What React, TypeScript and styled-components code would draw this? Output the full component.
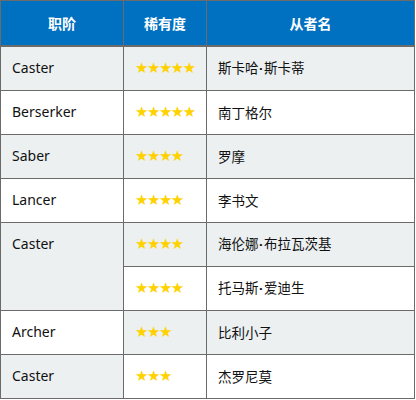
import React from "react";
import styled, { createGlobalStyle } from "styled-components";

const Global = createGlobalStyle`
  html, body { margin: 0; padding: 0; background: #ffffff; }
  body { font-family: "Noto Sans", "Noto Sans CJK SC", sans-serif; }
`;

const Table = styled.table`
  width: 414px;
  border-collapse: collapse;
  table-layout: fixed;
  font-size: 14px;
  color: #111;
`;

const Col = styled.col<{ $w: number }>`
  width: ${(p) => p.$w}px;
`;

const HeadCell = styled.th`
  height: 44px;
  padding: 0;
  background: #0070c0;
  color: #fff;
  font-family: "Noto Sans CJK SC", sans-serif;
  font-weight: 700;
  font-size: 14px;
  text-align: center;
  border: 1px solid #6b6b6b;
  border-bottom: 2px solid #6b6b6b;
`;

const Row = styled.tr`
  height: 44px;
`;

const Cell = styled.td<{ $shade?: boolean; $top?: boolean; $dashed?: boolean }>`
  padding: ${(p) => (p.$top ? "11px 11px 0" : "0 11px")};
  vertical-align: ${(p) => (p.$top ? "top" : "middle")};
  background: ${(p) => (p.$shade ? "#ecf0f1" : "#ffffff")};
  border: 1px solid #6b6b6b;
  ${(p) => (p.$dashed ? "border-top: 1px dashed #c8c8c8;" : "")}
  line-height: 20px;
  white-space: nowrap;
`;

const Name = styled.span`
  font-family: "Noto Sans CJK SC", sans-serif;
  font-size: 13.5px;
`;

const Dot = styled.span`
  font-family: "Liberation Sans", sans-serif;
  font-weight: 700;
  margin: 0 0.5px;
`;

const Stars = styled.span`
  font-family: "DejaVu Sans", sans-serif;
  font-size: 15px;
  color: #ffd200;
  letter-spacing: -1.5px;
`;

type R = {
  cls?: string;
  rowSpan?: number;
  clsShade?: boolean;
  stars: number;
  starShade: boolean;
  name: string;
  nameShade: boolean;
  dashed?: boolean;
};

const rows: R[] = [
  { cls: "Caster", clsShade: true, stars: 5, starShade: true, name: "斯卡哈·斯卡蒂", nameShade: true },
  { cls: "Berserker", clsShade: false, stars: 5, starShade: false, name: "南丁格尔", nameShade: false },
  { cls: "Saber", clsShade: true, stars: 4, starShade: true, name: "罗摩", nameShade: true },
  { cls: "Lancer", clsShade: false, stars: 4, starShade: false, name: "李书文", nameShade: false },
  { cls: "Caster", rowSpan: 2, clsShade: true, stars: 4, starShade: true, name: "海伦娜·布拉瓦茨基", nameShade: true },
  { stars: 4, starShade: false, name: "托马斯·爱迪生", nameShade: false, dashed: true },
  { cls: "Archer", clsShade: false, stars: 3, starShade: true, name: "比利小子", nameShade: true },
  { cls: "Caster", clsShade: true, stars: 3, starShade: false, name: "杰罗尼莫", nameShade: false },
];

function ServantName({ text }: { text: string }) {
  const parts = text.split("·");
  return (
    <Name>
      {parts.map((p, i) => (
        <React.Fragment key={i}>
          {i > 0 && <Dot>·</Dot>}
          {p}
        </React.Fragment>
      ))}
    </Name>
  );
}

export default function App() {
  return (
    <>
      <Global />
      <Table>
        <colgroup>
          <Col $w={123} />
          <Col $w={83} />
          <Col $w={208} />
        </colgroup>
        <thead>
          <tr>
            <HeadCell>职阶</HeadCell>
            <HeadCell>稀有度</HeadCell>
            <HeadCell>从者名</HeadCell>
          </tr>
        </thead>
        <tbody>
          {rows.map((r, i) => (
            <Row key={i}>
              {r.cls !== undefined && (
                <Cell $shade={r.clsShade} rowSpan={r.rowSpan} $top={!!r.rowSpan}>
                  {r.cls}
                </Cell>
              )}
              <Cell $shade={r.starShade} $dashed={r.dashed}>
                <Stars>{"★".repeat(r.stars)}</Stars>
              </Cell>
              <Cell $shade={r.nameShade}>
                <ServantName text={r.name} />
              </Cell>
            </Row>
          ))}
        </tbody>
      </Table>
    </>
  );
}
